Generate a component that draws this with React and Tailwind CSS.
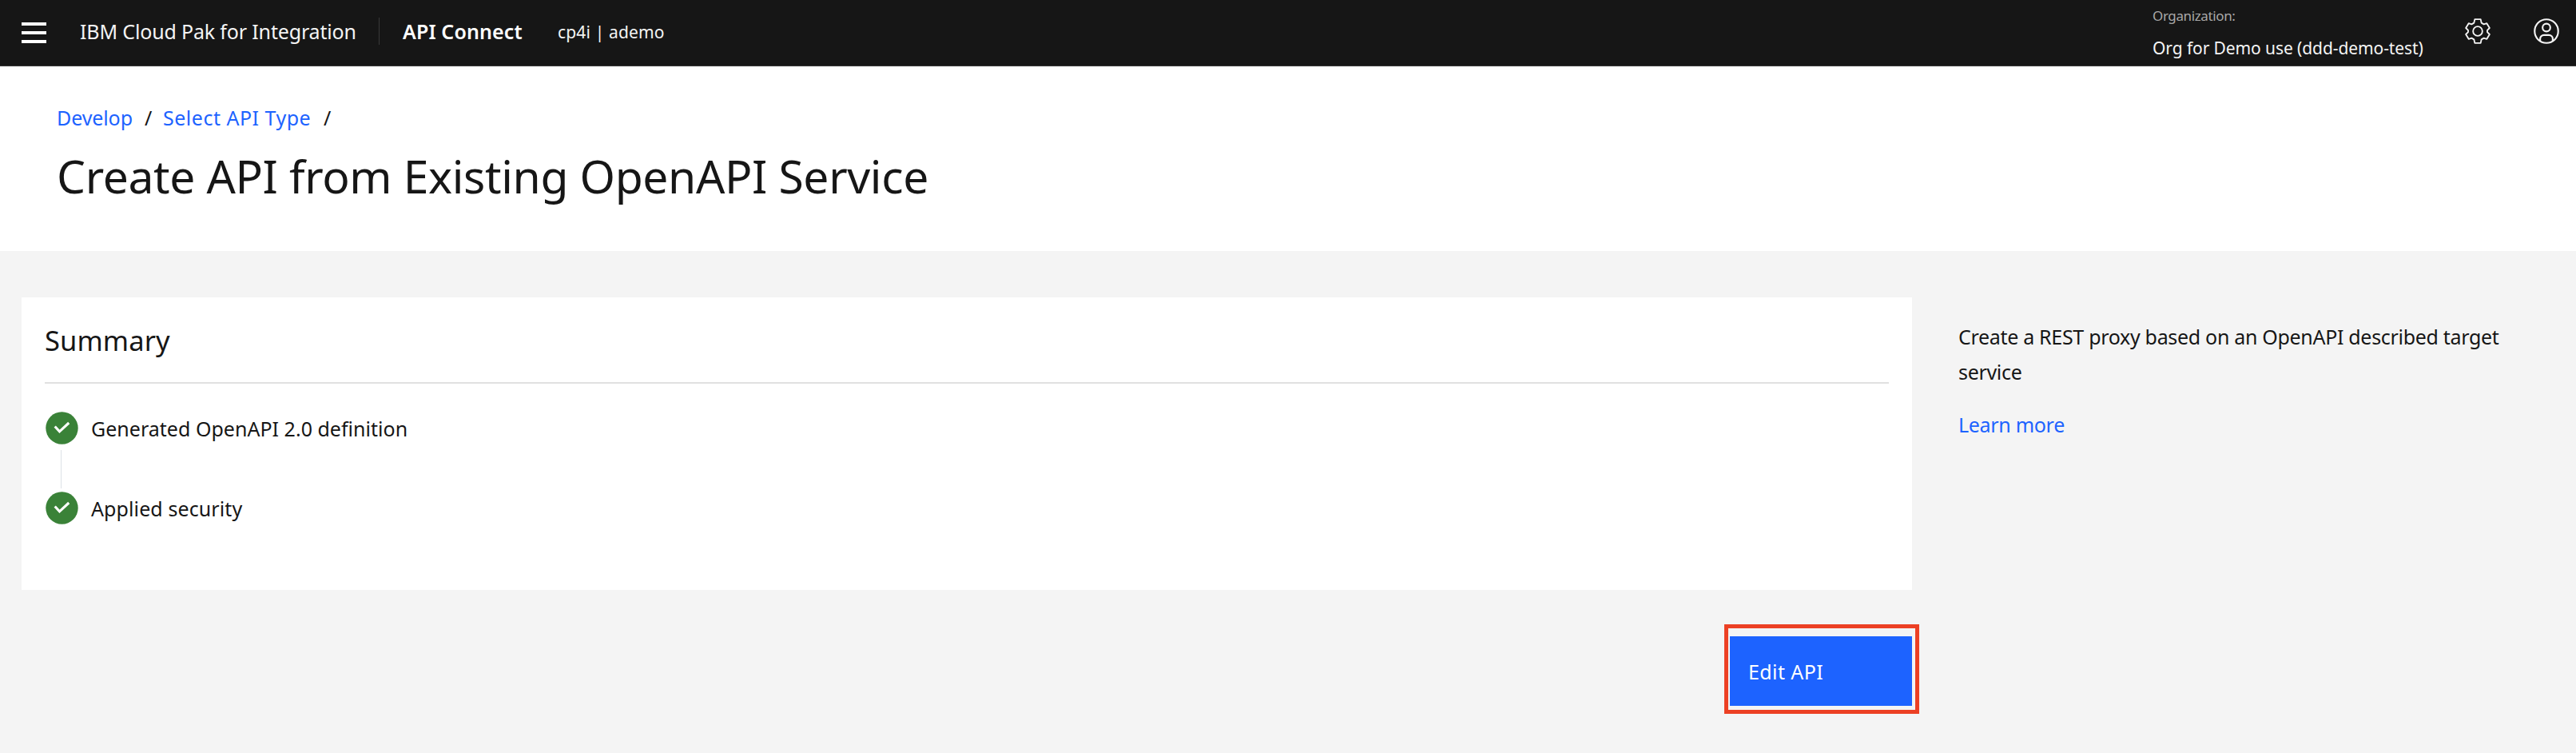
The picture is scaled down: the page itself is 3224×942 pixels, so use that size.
function MenuIcon() {
  return (
    <svg className="h-[26px] w-[31px]" viewBox="0 0 31 26" fill="#fff" shapeRendering="crispEdges">
      <rect width="31" height="4" />
      <rect y="11" width="31" height="4" />
      <rect y="22" width="31" height="4" />
    </svg>
  );
}

function SettingsIcon() {
  return (
    <svg
      className="mx-[2px] size-8 overflow-visible"
      viewBox="0 0 96 96"
      fill="none"
      stroke="#f4f4f4"
      strokeWidth="5.6"
      strokeLinejoin="round"
    >
      <path d="M37 3.5H59L62 17 71 22 82 18.5 92.5 36 84 44.5V51.5L92.5 60 82 77.5 71 74 62 79 59 92.5H37L34 79 25 74 14 77.5 3.5 60 12 51.5V44.5L3.5 36 14 18.5 25 22 34 17Z" />
      <circle cx="48" cy="48" r="17.5" />
    </svg>
  );
}

function UserIcon() {
  return (
    <svg className="size-9" viewBox="0 0 32 32" fill="none" stroke="#f4f4f4" strokeWidth="1.9">
      <circle cx="16" cy="16" r="13.1" />
      <circle cx="16" cy="12" r="4.3" />
      <path d="M9 26.6v-2.1a4.2 4.2 0 0 1 4.2-4.2h5.6a4.2 4.2 0 0 1 4.2 4.2v2.1" />
    </svg>
  );
}

function CheckBadge() {
  return (
    <svg className="size-[41px] shrink-0" viewBox="0 0 41 41">
      <circle cx="20.5" cy="20.5" r="20.2" fill="#3a8238" />
      <path d="M11.7 18.5 17.5 24.8 29.2 14" fill="none" stroke="#fff" strokeWidth="3.1" />
    </svg>
  );
}

function Step({ className, children }) {
  return (
    <li className="flex h-[41px] items-center">
      <CheckBadge />
      <span className={className}>{children}</span>
    </li>
  );
}

export default function App() {
  return (
    <div className="flex h-[942px] w-[3224px] flex-col overflow-hidden bg-[#f4f4f4] font-['Noto_Sans',sans-serif] text-[25px] leading-[44px] whitespace-nowrap text-[#161616]">
      <header className="flex h-[83px] shrink-0 justify-between border-b border-[#393939] bg-[#161616] text-[#f4f4f4]">
        <div className="flex h-[78px] items-center">
          <button className="ml-[27px] pt-[4px]" aria-label="Menu">
            <MenuIcon />
          </button>
          <span className="ml-[42px] w-[374px] tracking-[-0.16px]">IBM Cloud Pak for Integration</span>
          <span className="h-[34px] w-px bg-[#393939]" />
          <span className="ml-[29px] w-[194px] font-semibold tracking-[0.1px] text-white">API Connect</span>
          <span className="pt-[1px] text-[21px] tracking-[0.15px]">cp4i | ademo</span>
        </div>
        <div className="flex">
          <div className="flex w-[389px] flex-col">
            <span className="pt-[4px] text-[17px] leading-[32px] tracking-[-0.38px] text-[#a8a8a8]">Organization:</span>
            <span className="pt-[8px] text-[21px] leading-[32px] tracking-[-0.09px]">Org for Demo use (ddd-demo-test)</span>
          </div>
          <div className="flex h-[78px] items-center gap-[50px] pr-[19px]">
            <SettingsIcon />
            <UserIcon />
          </div>
        </div>
      </header>

      <section className="h-[231px] shrink-0 bg-white pt-[42px] pl-[71px]">
        <nav className="flex">
          <a className="w-[110px] tracking-[-0.1px] text-[#1d63ff]">Develop</a>
          <span className="w-[23px]">/</span>
          <a className="w-[201px] tracking-[0.5px] text-[#1d63ff]">Select API Type</a>
          <span>/</span>
        </nav>
        <h1 className="mt-[13px] text-[57px] leading-[76px] tracking-[-0.38px]">
          Create API from Existing OpenAPI Service
        </h1>
      </section>

      <main className="flex pt-[58px] pl-[27px]">
        <div className="flex w-[2366px] flex-col items-end">
          <section className="h-[366px] w-full bg-white pr-[29px] pl-[29px]">
            <h2 className="h-[108px] border-b-2 border-[#e0e0e0] pt-[32px] text-[34.5px] leading-[44px] tracking-[0.1px]">
              Summary
            </h2>
            <ul className="flex flex-col pt-[35px] pl-[1px]">
              <Step className="pt-[1px] pl-[16px] tracking-[0.02px]">Generated OpenAPI 2.0 definition</Step>
              <li className="mt-[7px] mb-[4px] ml-[19px] h-[48px] w-px bg-[#dde1e6]" aria-hidden="true" />
              <Step className="pt-[1px] pl-[16px] tracking-[0.1px]">Applied security</Step>
            </ul>
          </section>
          <div className="mt-[43px] -mr-[9px] h-[112px] w-[244px] border-[5px] border-[#ec4024] pt-[10px] pl-[2px]">
            <button className="flex h-[87px] w-[228px] items-center bg-[#1d63ff] pl-[23px] tracking-[0.4px] text-white">
              Edit API
            </button>
          </div>
        </div>
        <aside className="ml-[58px] w-[720px] pt-[27px]">
          <p className="tracking-[-0.31px] whitespace-normal">
            Create a REST proxy based on an OpenAPI described target service
          </p>
          <a className="mt-[22px] block tracking-[-0.3px] text-[#1d63ff]">Learn more</a>
        </aside>
      </main>
    </div>
  );
}
